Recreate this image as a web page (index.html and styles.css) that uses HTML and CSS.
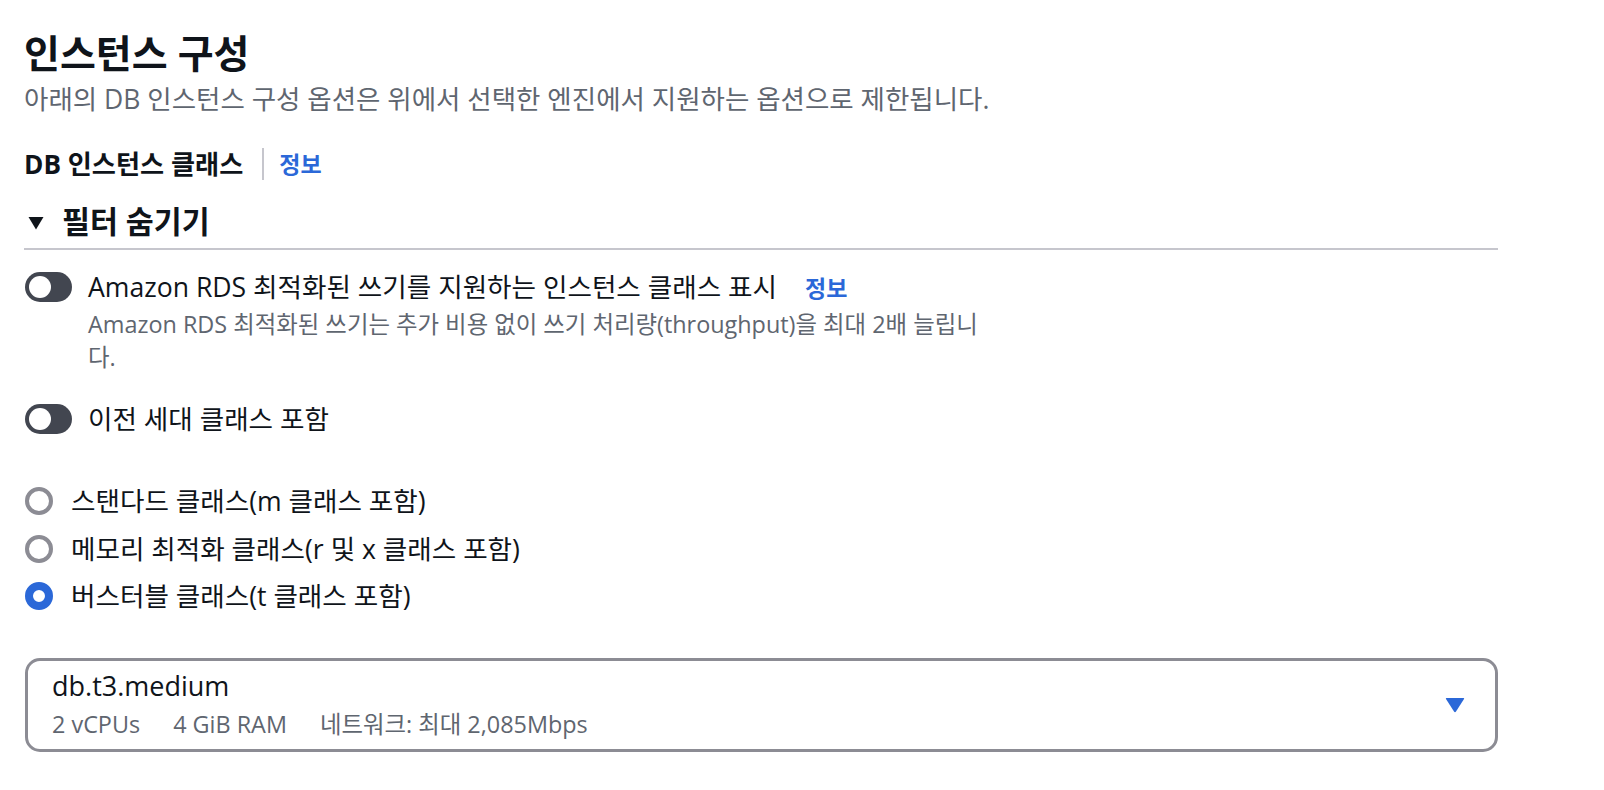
FILE: index.html
```html
<!DOCTYPE html>
<html lang="ko">
<head>
<meta charset="utf-8">
<title>인스턴스 구성</title>
<link rel="stylesheet" href="styles.css">
</head>
<body>
<div class="page">
  <h2 class="title">인스턴스 구성</h2>
  <p class="subtitle">아래의 DB 인스턴스 구성 옵션은 위에서 선택한 엔진에서 지원하는 옵션으로 제한됩니다.</p>

  <div class="field-label">
    <span class="label">DB 인스턴스 클래스</span>
    <span class="sep"></span>
    <a class="info">정보</a>
  </div>

  <div class="filter-head">
    <svg class="caret" width="16" height="14" viewBox="0 0 16 14"><path d="M0.5 1 H15.5 L8 13.5 Z" fill="#0f141a"/></svg>
    <span>필터 숨기기</span>
  </div>

  <div class="toggle-row first">
    <span class="toggle"><span class="knob"></span></span>
    <div class="toggle-body">
      <div class="toggle-label">Amazon RDS 최적화된 쓰기를 지원하는 인스턴스 클래스 표시<a class="info inline">정보</a></div>
      <div class="toggle-desc">Amazon RDS 최적화된 쓰기는 추가 비용 없이 쓰기 처리량(throughput)을 최대 2배 늘립니다.</div>
    </div>
  </div>

  <div class="toggle-row second">
    <span class="toggle"><span class="knob"></span></span>
    <div class="toggle-body">
      <div class="toggle-label">이전 세대 클래스 포함</div>
    </div>
  </div>

  <div class="radios">
    <div class="radio-row"><span class="radio"></span><span class="radio-label">스탠다드 클래스(m 클래스 포함)</span></div>
    <div class="radio-row"><span class="radio"></span><span class="radio-label">메모리 최적화 클래스(r 및 x 클래스 포함)</span></div>
    <div class="radio-row"><span class="radio checked"></span><span class="radio-label">버스터블 클래스(t 클래스 포함)</span></div>
  </div>

  <div class="select">
    <div class="select-text">
      <div class="option-label">db.t3.medium</div>
      <div class="option-tags"><span class="tag">2 vCPUs</span><span class="tag">4 GiB RAM</span><span class="tag">네트워크: 최대 2,085Mbps</span></div>
    </div>
    <svg class="select-arrow" width="20" height="16" viewBox="0 0 20 16"><path d="M1.5 1 H18.5 Q19.6 1 19 2 L11 14.6 Q10 16 9 14.6 L1 2 Q0.4 1 1.5 1 Z" fill="#2b68d8"/></svg>
  </div>
</div>
</body>
</html>
```

FILE: styles.css
```css
* { box-sizing: border-box; }

html, body {
  margin: 0;
  padding: 0;
  background: #ffffff;
}

body {
  font-family: "Open Sans", "Noto Sans CJK KR", sans-serif;
  color: #0f141a;
}

.page {
  width: 1604px;
  padding: 30px 106px 30px 24px;
}

.title {
  margin: 0;
  font-size: 39px;
  line-height: 46px;
  font-weight: 700;
  color: #0f141a;
}

.subtitle {
  margin: 5px 0 0;
  font-size: 26.5px;
  line-height: 36px;
  color: #5f6670;
}

.field-label {
  margin-top: 29px;
  display: flex;
  align-items: center;
  height: 36px;
  font-size: 26.2px;
  line-height: 36px;
}

.field-label .label {
  font-weight: 700;
}

.sep {
  width: 2px;
  height: 32px;
  background: #c6c6cd;
  margin-left: 19px;
  margin-right: 15px;
}

.info {
  color: #2b68d8;
  font-size: 23px;
  font-weight: 700;
  text-decoration: none;
}

.info.inline {
  margin-left: 28px;
}

.filter-head {
  margin-top: 19px;
  display: flex;
  align-items: center;
  font-size: 30.4px;
  line-height: 42px;
  font-weight: 700;
  padding-bottom: 5px;
  border-bottom: 2px solid #c6c6cd;
}

.caret {
  margin-left: 4px;
  margin-right: 18px;
  margin-top: 1px;
}

.toggle-row {
  display: flex;
  align-items: flex-start;
  margin-left: 1px;
}

.toggle-row.first { margin-top: 18.5px; }
.toggle-row.second { margin-top: 27.6px; }

.toggle {
  flex: none;
  width: 47px;
  height: 30px;
  margin-top: 3px;
  border-radius: 15px;
  background: #424650;
  position: relative;
}

.knob {
  position: absolute;
  left: 4px;
  top: 4px;
  width: 22px;
  height: 22px;
  border-radius: 50%;
  background: #ffffff;
}

.toggle-body {
  margin-left: 16px;
}

.toggle-label {
  font-size: 26.6px;
  line-height: 36px;
}

.toggle-desc {
  margin-top: 2.3px;
  max-width: 897px;
  font-size: 23.4px;
  line-height: 33px;
  color: #5f6670;
}

.radios {
  margin-top: 45.8px;
  margin-left: 1px;
  display: flex;
  flex-direction: column;
  gap: 11.6px;
}

.radio-row {
  display: flex;
  align-items: center;
  height: 36px;
  font-size: 26.6px;
  line-height: 36px;
}

.radio {
  flex: none;
  width: 28px;
  height: 28px;
  border-radius: 50%;
  border: 4px solid #8c8c94;
  background: #ffffff;
  margin-right: 18px;
}

.radio.checked {
  border: 8px solid #2b68d8;
}

.select {
  margin-top: 43.4px;
  margin-left: 1px;
  height: 94px;
  border: 3px solid #8c8c94;
  border-radius: 15px;
  display: flex;
  align-items: flex-start;
  padding: 7.4px 30px 0 24px;
}

.select-text {
  flex: 1;
}

.option-label {
  font-size: 27px;
  line-height: 36px;
}

.option-tags {
  margin-top: 5px;
  font-size: 23.4px;
  line-height: 30px;
  color: #5f6670;
  display: flex;
}

.tag {
  margin-right: 33px;
}

.select-arrow {
  flex: none;
  align-self: center;
  margin-top: -6px;
}
```
